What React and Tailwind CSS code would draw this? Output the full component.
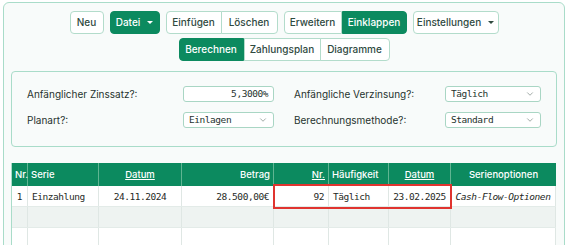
import { ChevronDown } from "lucide-react";

const sans = "font-['Inter','Liberation_Sans',sans-serif]";
const mono = "font-['DejaVu_Sans_Mono','Liberation_Mono',monospace] tracking-[-0.45px]";

const btn =
  "flex h-[23px] items-center border border-[#b3dccb] bg-white px-[8px] text-[10px] font-medium text-[#2f4a3f]";
const btnOn =
  "flex h-[23px] items-center border border-[#0c8a5f] bg-[#0c8a5f] px-[8px] text-[10px] font-medium text-white";

function Caret({ light }) {
  return (
    <span
      className={`ml-[7px] inline-block h-0 w-0 border-x-[3px] border-t-[3px] border-x-transparent ${
        light ? "border-t-white" : "border-t-[#2f4a3f]"
      }`}
    />
  );
}

function Field({ label, value, width, select, right }) {
  return (
    <div className="flex items-center">
      <span className="flex-1 text-[10px] text-[#26332e]">{label}</span>
      <div
        className={`flex h-[16px] items-center rounded-[3px] border border-[#a9d6c4] bg-white px-[5px] text-[9.5px] text-[#26332e] ${mono} ${width}`}
      >
        <span className={`flex-1 ${right ? "text-right" : ""}`}>{value}</span>
        {select && <ChevronDown size={10} strokeWidth={1.5} className="text-[#6b7a74]" />}
      </div>
    </div>
  );
}

const cols = [
  { w: "w-[16px]", h: "Nr.", a: "text-center" },
  { w: "w-[71px]", h: "Serie", a: "text-left" },
  { w: "w-[83px]", h: "Datum", a: "text-center", u: true },
  { w: "w-[92px]", h: "Betrag", a: "text-right" },
  { w: "w-[55px]", h: "Nr.", a: "text-right", u: true },
  { w: "w-[60px]", h: "Häufigkeit", a: "text-left" },
  { w: "w-[62px]", h: "Datum", a: "text-center", u: true },
  { w: "flex-1", h: "Serienoptionen", a: "text-center" },
];

const row = ["1", "Einzahlung", "24.11.2024", "28.500,00€", "92", "Täglich", "23.02.2025", "Cash-Flow-Optionen"];

export default function App() {
  return (
    <div className={`h-[245px] overflow-hidden bg-white pl-[3px] pr-[5px] pt-[2px] ${sans}`}>
      <div className="h-[260px] rounded-md border border-[#a9dcc9] bg-[#f8fbfa] px-[7px] pt-[8px]">
        <div className="flex justify-center gap-[6px]">
          <button className={`${btn} rounded-[4px] w-[34px] justify-center`}>Neu</button>
          <button className={`${btnOn} rounded-[4px] w-[50px] justify-center`}>
            Datei
            <Caret light />
          </button>
          <div className="flex">
            <button className={`${btn} rounded-l-[4px] w-[56px] justify-center`}>Einfügen</button>
            <button className={`${btn} -ml-px rounded-r-[4px] w-[57px] justify-center`}>Löschen</button>
          </div>
          <div className="flex">
            <button className={`${btn} rounded-l-[4px] w-[58px] justify-center`}>Erweitern</button>
            <button className={`${btnOn} rounded-r-[4px] w-[65px] justify-center`}>Einklappen</button>
          </div>
          <button className={`${btn} rounded-[4px] w-[86px] justify-center`}>
            Einstellungen
            <Caret />
          </button>
        </div>
        <div className="mt-[4px] flex justify-center">
          <button className={`${btnOn} rounded-l-[4px] w-[65px] justify-center`}>Berechnen</button>
          <button className={`${btn} w-[77px] justify-center`}>Zahlungsplan</button>
          <button className={`${btn} -ml-px rounded-r-[4px] w-[70px] justify-center`}>Diagramme</button>
        </div>

        <div className="mt-[10px] grid grid-cols-2 gap-x-[20px] gap-y-[10px] rounded-[4px] border border-[#a9dcc9] bg-[#f8fbfa] pb-[18px] pl-[15px] pr-[15px] pt-[14px]">
          <Field label="Anfänglicher Zinssatz?:" value="5,3000%" width="w-[91px]" right />
          <Field label="Anfängliche Verzinsung?:" value="Täglich" width="w-[96px]" select />
          <Field label="Planart?:" value="Einlagen" width="w-[91px]" select />
          <Field label="Berechnungsmethode?:" value="Standard" width="w-[96px]" select />
        </div>

        <div className="relative mt-[16px] mr-[1px] border-l border-[#a9dcc9]">
          <div className="flex h-[23px] bg-[#0c8a5f] text-[9.5px] font-medium text-white">
            {cols.map((c, i) => (
              <div
                key={i}
                className={`${c.w} ${c.a} flex-none self-stretch border-r border-[#5fb592] px-[3px] leading-[23px] last:flex-1 last:border-r-0`}
              >
                <span className={c.u ? "underline" : ""}>{c.h}</span>
              </div>
            ))}
          </div>
          {[0, 1, 2].map((r) => (
            <div
              key={r}
              className={`flex h-[21px] border-b border-[#e3ebe8] text-[9.5px] text-[#1f2a26] ${mono} ${
                r === 1 ? "bg-[#eef3f1]" : "bg-white"
              }`}
            >
              {cols.map((c, i) => (
                <div
                  key={i}
                  className={`${c.w} ${c.a} flex-none whitespace-nowrap border-r border-[#dfe7e4] px-[4px] leading-[21px] last:flex-1 ${
                    i === 7 ? "italic" : ""
                  }`}
                >
                  {r === 0 ? row[i] : ""}
                </div>
              ))}
            </div>
          ))}
          <div className="absolute left-[261px] top-[21px] h-[25px] w-[179px] border-2 border-[#e0342f]" />
        </div>
      </div>
    </div>
  );
}
